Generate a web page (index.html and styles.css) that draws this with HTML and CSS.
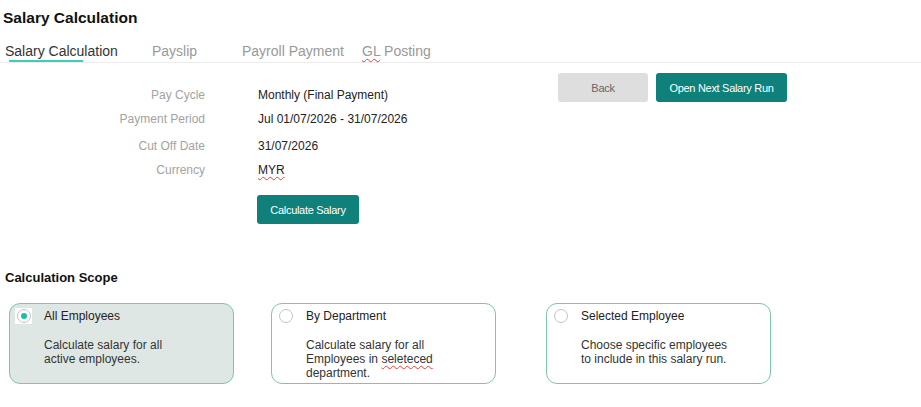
FILE: index.html
```html
<!DOCTYPE html>
<html lang="en">
<head>
    <meta charset="UTF-8">
    <title>Salary Calculation</title>
    <link rel="stylesheet" href="styles.css">
</head>
<body>

    <h1 class="page-title">Salary Calculation</h1>

    <!-- tabs -->
    <div class="tabs">
        <a href="#" class="tab active">Salary Calculation</a>
        <a href="#" class="tab">Payslip</a>
        <a href="#" class="tab">Payroll Payment</a>
        <a href="#" class="tab"><span class="typo">GL</span> Posting</a>
    </div>

    <!-- salary run summary -->
    <div class="summary">
        <div class="info">
            <div class="label">Pay Cycle</div>
            <div class="value">Monthly (Final Payment)</div>
            <div class="label">Payment Period</div>
            <div class="value">Jul 01/07/2026 - 31/07/2026</div>
            <div class="label gap-top">Cut Off Date</div>
            <div class="value gap-top">31/07/2026</div>
            <div class="label">Currency</div>
            <div class="value"><span class="typo">MYR</span></div>
            <div></div>
            <div class="calc-row">
                <button class="btn btn-primary btn-calc">Calculate Salary</button>
            </div>
        </div>

        <div class="actions">
            <button class="btn btn-grey">Back</button>
            <button class="btn btn-primary btn-wide">Open Next Salary Run</button>
        </div>
    </div>

    <!-- calculation scope -->
    <h2 class="section-title">Calculation Scope</h2>

    <div class="scope">
        <label class="scope-card selected">
            <span class="radio"><span class="dot"></span></span>
            <span class="scope-text">
                <span class="scope-name">All Employees</span>
                <span class="scope-desc">Calculate salary for all<br>active employees.</span>
            </span>
        </label>

        <label class="scope-card">
            <span class="radio"></span>
            <span class="scope-text">
                <span class="scope-name">By Department</span>
                <span class="scope-desc">Calculate salary for all<br>Employees in <span class="typo">seleteced</span><br>department.</span>
            </span>
        </label>

        <label class="scope-card">
            <span class="radio"></span>
            <span class="scope-text">
                <span class="scope-name">Selected Employee</span>
                <span class="scope-desc">Choose specific employees<br>to include in this salary run.</span>
            </span>
        </label>
    </div>

</body>
</html>
```

FILE: styles.css
```css
body {
    margin: 0;
    font-family: "Liberation Sans", Arial, sans-serif;
    color: #222;
    background: #fff;
}

.page-title {
    margin: 8px 0 0 3px;
    font-size: 15.5px;
    line-height: 20px;
    font-weight: bold;
    color: #111;
}

/* tabs */
.tabs {
    display: grid;
    grid-template-columns: 147px 90px 120px auto;
    margin-top: 14px;
    padding-left: 5px;
    border-bottom: 1px solid #ececec;
}
.tab {
    font-size: 14px;
    line-height: 18px;
    padding-bottom: 1px;
    color: #999;
    text-decoration: none;
}
.tab.active {
    color: #333;
}
.tab.active::after {
    content: "";
    display: block;
    width: 74px;
    height: 2px;
    margin: 0 0 -1px 4px;
    background: #3ecdbd;
}

.typo {
    text-decoration: underline wavy #e0443c;
    text-decoration-thickness: 1px;
    text-underline-offset: 2px;
}

/* summary */
.summary {
    display: flex;
}
.info {
    flex: 0 0 558px;
    display: grid;
    grid-template-columns: 205px auto;
    column-gap: 53px;
    row-gap: 8px;
    align-content: start;
    margin-top: 24px;
    font-size: 12px;
    line-height: 16px;
}
.label {
    text-align: right;
    color: #a3a3a3;
}
.value {
    color: #222;
}
.gap-top {
    margin-top: 3px;
}
.calc-row {
    margin: 9px 0 0 -1px;
}

.actions {
    display: flex;
    gap: 8px;
    padding-top: 10px;
}

.btn {
    height: 29px;
    padding: 0;
    border: none;
    border-radius: 3px;
    font-family: "Liberation Sans", Arial, sans-serif;
    font-size: 11px;
    letter-spacing: -0.3px;
    white-space: nowrap;
    cursor: pointer;
}
.btn-primary {
    background-color: #0f817a;
    color: #fff;
}
.btn-grey {
    width: 90px;
    background-color: #dedede;
    color: #666;
}
.btn-calc {
    width: 102px;
}
.btn-wide {
    width: 131px;
}

/* calculation scope */
.section-title {
    margin: 46px 0 0 5px;
    font-size: 13px;
    line-height: 16px;
    font-weight: bold;
    color: #111;
}

.scope {
    display: grid;
    grid-template-columns: 262px 275px 225px;
    margin: 17px 0 0 9px;
}
.scope-card {
    display: flex;
    gap: 12px;
    box-sizing: border-box;
    width: 225px;
    height: 81px;
    padding: 3px 6px 0 5px;
    border: 1px solid #80c4ab;
    border-radius: 11px;
    font-size: 12px;
    cursor: pointer;
}
.scope-card.selected {
    background-color: #dfe7e5;
}

.radio {
    flex: 0 0 auto;
    display: flex;
    align-items: center;
    justify-content: center;
    width: 17px;
    height: 16px;
    margin-top: 1px;
    background: #fff;
    position: relative;
}
.radio::before {
    content: "";
    position: absolute;
    left: 2px;
    top: 1px;
    width: 12px;
    height: 12px;
    border: 1px solid #c4c4c4;
    border-radius: 50%;
}
.radio .dot {
    width: 6px;
    height: 6px;
    margin-left: 1px;
    border-radius: 50%;
    background: #17bfa9;
}

.scope-text {
    display: flex;
    flex-direction: column;
}
.scope-name {
    line-height: 16px;
    margin-top: 1px;
    color: #222;
}
.scope-desc {
    margin-top: 14px;
    line-height: 14px;
    color: #333;
}
```
